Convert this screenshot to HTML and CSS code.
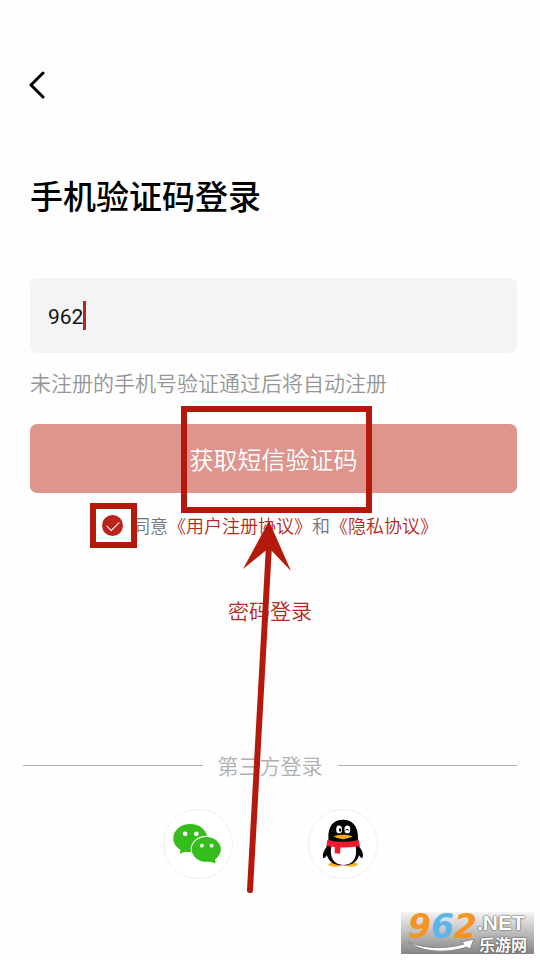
FILE: index.html
```html
<!DOCTYPE html>
<html lang="zh-CN">
<head>
  <meta charset="UTF-8">
  <meta name="viewport" content="width=device-width, initial-scale=1.0">
  <title>手机验证码登录</title>
  <link rel="stylesheet" href="styles.css">
</head>
<body>

  <header>
    <button type="button" class="back" aria-label="返回">
      <svg width="16" height="28" viewBox="0 0 16 28">
        <path d="M14 2 L2 14 L14 26" />
      </svg>
    </button>
  </header>

  <main>
    <!-- LOGIN FORM -->
    <form>
      <div class="fields">
        <h1>手机验证码登录</h1>
        <div class="phone">
          <input type="tel" value="962" aria-label="手机号">
          <span class="caret"></span>
        </div>
        <p class="hint">未注册的手机号验证通过后将自动注册</p>
        <div class="submit">
          <button type="button">获取短信验证码</button>
          <span class="mark mark-submit"></span>
        </div>
      </div>

      <div class="terms">
        <span class="check">
          <input type="checkbox" id="agree" checked>
          <span class="mark mark-check"></span>
        </span>
        <p><label for="agree">同意</label><a href="#terms">《用户注册协议》</a>和<a href="#privacy">《隐私协议》</a></p>
      </div>

      <svg class="arrow" width="50" height="374" viewBox="0 0 50 374">
        <path class="shaft" d="M27 24 L8 369" />
        <path class="head" d="M27 0 L49 50 L27 27 L1 48 Z" />
      </svg>
    </form>

    <a class="password" href="#password">密码登录</a>

    <!-- THIRD PARTY LOGIN -->
    <h2>第三方登录</h2>
    <div class="social">
      <button type="button" aria-label="微信登录">
        <svg viewBox="0 0 70 70">
          <g fill="#35bd1b">
            <ellipse cx="27" cy="29" rx="17.500" ry="14.500" />
            <path d="M18 38 L16 45 L27 41 Z" />
          </g>
          <g fill="#35bd1b">
            <ellipse cx="43.500" cy="40.500" rx="16" ry="14" fill="#fff" />
            <ellipse cx="43.500" cy="40.500" rx="15" ry="12.800" />
            <path d="M44 52 L53 55 L52 46 Z" />
          </g>
          <g fill="#fff">
            <circle cx="21.700" cy="24.500" r="2.400" />
            <circle cx="33.300" cy="24.500" r="2.400" />
            <circle cx="39" cy="36.700" r="2" />
            <circle cx="49" cy="36.700" r="2" />
          </g>
        </svg>
      </button>
      <button type="button" aria-label="QQ登录">
        <svg viewBox="0 0 70 70">
          <g fill="#fbb11c">
            <ellipse cx="27" cy="56" rx="7" ry="2.500" />
            <ellipse cx="43" cy="56" rx="7" ry="2.500" />
          </g>
          <path d="M20 30 C19 16 26 10 35 10 C44 10 51 16 50.500 30 L52 38 C55 42 56.500 46 55 49.500 C53.500 49.500 52.500 48 51.500 46.500 C50 52 46 57 35 57 C24 57 20 52 18.500 46.500 C17.500 48 16 49.500 14.500 49.500 C13.500 46 15 42 18 38 Z" fill="#050505" />
          <path d="M23 37 L48 37 C50 48 46 56.500 35.500 56.500 C25 56.500 21 48 23 37 Z" fill="#fff" />
          <path d="M19 30.500 C30 33.500 41 33.500 51 30.500 L52.500 37 C45 38.500 39 38.500 32.500 38.500 L32 45 L26.500 44.500 L26.500 38 C24 38 21 37.500 18 36.500 Z" fill="#ee1c2e" />
          <ellipse cx="31" cy="20" rx="3" ry="4" fill="#fff" />
          <ellipse cx="39.500" cy="20" rx="3" ry="4" fill="#fff" />
          <ellipse cx="32" cy="20.500" rx="1.200" ry="1.800" />
          <path d="M37.500 21 Q39 18.500 41 21" fill="none" stroke="#000" />
          <path d="M25 27 Q35 24 45 27 Q40 30 35 30 Q30 30 25 27 Z" fill="#fbab18" />
        </svg>
      </button>
    </div>
  </main>

  <!-- SITE BADGE -->
  <div class="badge">
    <svg class="swoosh" width="70" height="14" viewBox="0 0 70 14">
      <path d="M2 3 C18 10 42 10 58 5 L55 3 L68 0 L64 10 L61 8 C40 15 15 13 2 3 Z" />
    </svg>
    <strong>9<span>6</span>2</strong>
    <div class="site">
      <em>.NET</em>
      <b>乐游网</b>
    </div>
  </div>

</body>
</html>
```
FILE: styles.css
```css
* {
  box-sizing: border-box;
}

body {
  margin: 0;
  min-height: 100vh;
  position: relative;
  background: #fefefe;
  color: #000;
  font-family: Roboto, "Noto Sans CJK SC", sans-serif;
  font-weight: 350;
}

button, input {
  font: inherit;
}

button {
  padding: 0;
  border: none;
  cursor: pointer;
}

a {
  color: #b12a22;
  text-decoration: none;
}

header {
  padding: 71px 29px 0;
}

.back {
  display: block;
  background: none;
}

.back svg {
  display: block;
  fill: none;
  stroke: #000;
  stroke-width: 3;
  stroke-linecap: round;
  stroke-linejoin: round;
}

/* Form */
form {
  position: relative;
}

.fields {
  padding: 74px 23px 0 30px;
}

h1 {
  margin: 0;
  font-size: 33px;
  font-weight: 500;
  line-height: 50px;
}

.phone {
  position: relative;
  margin-top: 55px;
}

.phone input {
  display: block;
  width: 100%;
  height: 75px;
  padding: 2px 18px 0;
  border: none;
  border-radius: 7px;
  outline: none;
  background: #f4f4f4;
  color: #111;
  font-size: 21px;
  font-weight: 400;
}

.caret {
  position: absolute;
  left: 53px;
  top: 23px;
  width: 3px;
  height: 29px;
  background: #b12a22;
}

.hint {
  margin: 15px 0 0;
  color: #959595;
  font-size: 21px;
  line-height: 32px;
}

.submit {
  position: relative;
  margin-top: 24px;
}

.submit button {
  display: block;
  width: 100%;
  height: 69px;
  border-radius: 7px;
  background: #dd958e;
  color: #fff;
  font-size: 24px;
}

.terms {
  display: flex;
  justify-content: center;
  align-items: center;
  gap: 9px;
  margin-top: 18px;
  color: #747474;
  font-family: "Noto Sans CJK SC", sans-serif;
  font-size: 18px;
  line-height: 28px;
}

.terms p {
  margin: 0;
}

.check {
  position: relative;
}

.check input {
  appearance: none;
  display: block;
  width: 21px;
  height: 21px;
  margin: 0;
  border-radius: 50%;
  background: #b9251d;
}

.check input:checked::after {
  content: "";
  display: block;
  width: 11px;
  height: 6px;
  margin: 0 auto;
  border: solid #fff;
  border-width: 0 0 1px 1px;
  transform: translateY(6px) rotate(-45deg);
}

/* Highlight frames and arrow */
.mark {
  position: absolute;
  border: 6px solid #b5190c;
  pointer-events: none;
}

.mark-submit {
  top: -18px;
  bottom: -20px;
  left: 50%;
  width: 191px;
  margin-left: -93px;
}

.mark-check {
  top: -12px;
  left: -12px;
  width: 47px;
  height: 45px;
}

.arrow {
  position: absolute;
  top: 422px;
  left: 50%;
  margin-left: -28px;
  pointer-events: none;
}

.shaft {
  fill: none;
  stroke: #b5190c;
  stroke-width: 6;
  stroke-linecap: round;
}

.head {
  fill: #b5190c;
}

.password {
  display: table;
  margin: 57px auto 0;
  font-size: 21px;
  line-height: 32px;
}

/* Third party login */
h2 {
  display: flex;
  align-items: center;
  gap: 15px;
  margin: 123px 23px 0;
  color: #b0b0b0;
  font-size: 21px;
  font-weight: 350;
  line-height: 32px;
}

h2::before, h2::after {
  content: "";
  flex: 1;
  height: 1px;
  margin-bottom: 3px;
  background: #b0b0b0;
}

.social {
  display: flex;
  justify-content: center;
  gap: 75px;
  margin-top: 26px;
}

.social button {
  width: 70px;
  height: 70px;
  border: 1px solid #f0f0f0;
  border-radius: 50%;
  background: #fff;
}

.social svg {
  display: block;
}

/* Badge */
.badge {
  position: absolute;
  right: 6px;
  bottom: 6px;
  display: flex;
  width: 133px;
  height: 42px;
  padding-left: 7px;
  background: linear-gradient(#f4f4f4, #858585);
}

.badge strong {
  color: #f59422;
  font-family: "DejaVu Sans", sans-serif;
  font-size: 33px;
  font-weight: 700;
  font-style: italic;
  line-height: 30px;
}

.badge strong span {
  color: #5db4e6;
}

.site {
  color: #fff;
  text-shadow: 0 0 2px #444, 0 0 1px #555;
}

.site em, .site b {
  display: block;
  font-weight: 700;
}

.site em {
  font-family: "Liberation Sans", sans-serif;
  font-size: 21px;
  font-style: normal;
  line-height: 22px;
}

.site b {
  padding-left: 2px;
  font-family: "Noto Sans CJK SC", sans-serif;
  font-size: 16px;
  line-height: 20px;
}

.swoosh {
  position: absolute;
  left: 5px;
  bottom: 1px;
  fill: #fff;
  stroke: #888;
}
```
